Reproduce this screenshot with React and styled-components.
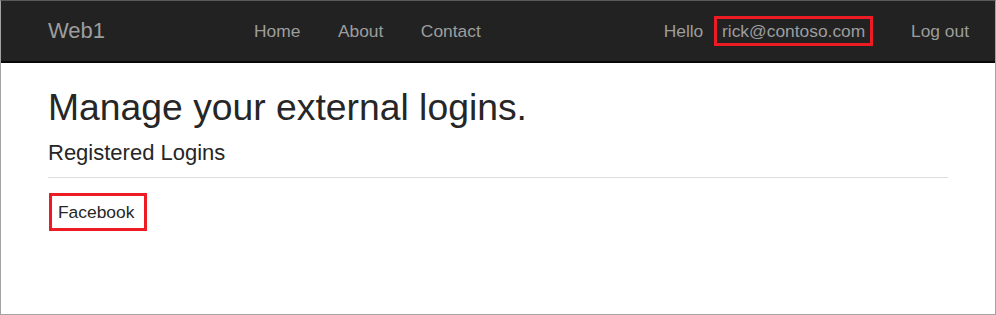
import styled, { createGlobalStyle } from 'styled-components'

const GlobalStyle = createGlobalStyle`
    html, body {
        margin: 0;
        padding: 0;
        background: #fff;
    }
    body {
        font-family: "Liberation Sans", Arial, sans-serif;
    }
`

const Frame = styled.div`
    width: 996px;
    height: 315px;
    box-sizing: border-box;
    border: 1px solid #a3a3a3;
    border-top-color: #5a5a5a;
    overflow: hidden;
    background: #fff;
`

const NavBar = styled.nav`
    height: 60px;
    background: #222;
    border-bottom: 2px solid #080808;
    display: flex;
    align-items: center;
    padding: 0 26px 0 47px;
`

const Brand = styled.a`
    width: 187.25px;
    font-size: 22px;
    color: #9d9d9d;
    text-decoration: none;
`

const NavList = styled.div`
    display: flex;
    align-items: center;
`

const NavLink = styled.a`
    font-size: 17.4px;
    color: #9d9d9d;
    padding: 0 18.75px;
    text-decoration: none;
`

const UserArea = styled.div`
    margin-left: auto;
    display: flex;
    align-items: center;
`

const Hello = styled.span`
    font-size: 17.4px;
    color: #9d9d9d;
    margin-right: 11px;
`

// red call-out box drawn round a piece of text
const Highlight = styled.span`
    display: inline-block;
    border: 3px solid #ed1c24;
    padding: ${({ $pad }) => $pad};
    font-size: 17.4px;
    line-height: 20px;
    color: ${({ $color }) => $color};
`

const LogOut = styled.a`
    font-size: 17.4px;
    color: #9d9d9d;
    margin-left: 38px;
    text-decoration: none;
`

const Main = styled.main`
    padding: 0 47px;
    color: #262626;
`

const Title = styled.h1`
    font-size: 37.3px;
    font-weight: 400;
    line-height: 1.1;
    margin: 24px 0 0;
`

const SubTitle = styled.h4`
    font-size: 22px;
    font-weight: 400;
    line-height: 1.1;
    margin: 13px 0 0;
`

const Rule = styled.hr`
    border: 0;
    border-top: 1px solid #ddd;
    margin: 12px 0 15px;
`

const LoginList = styled.div`
    display: flex;
    padding-left: 1px;
`

export default function App() {
    return (
        <>
            <GlobalStyle />
            <Frame>
                <NavBar>
                    <Brand>Web1</Brand>
                    <NavList>
                        <NavLink>Home</NavLink>
                        <NavLink>About</NavLink>
                        <NavLink>Contact</NavLink>
                    </NavList>
                    <UserArea>
                        <Hello>Hello</Hello>
                        <Highlight $pad="2px 4.7px" $color="#9d9d9d">
                            rick@contoso.com
                        </Highlight>
                        <LogOut>Log out</LogOut>
                    </UserArea>
                </NavBar>
                <Main>
                    <Title>Manage your external logins.</Title>
                    <SubTitle>Registered Logins</SubTitle>
                    <Rule />
                    <LoginList>
                        <Highlight $pad="6px 10px 6px 6px" $color="#262626">
                            Facebook
                        </Highlight>
                    </LoginList>
                </Main>
            </Frame>
        </>
    )
}
